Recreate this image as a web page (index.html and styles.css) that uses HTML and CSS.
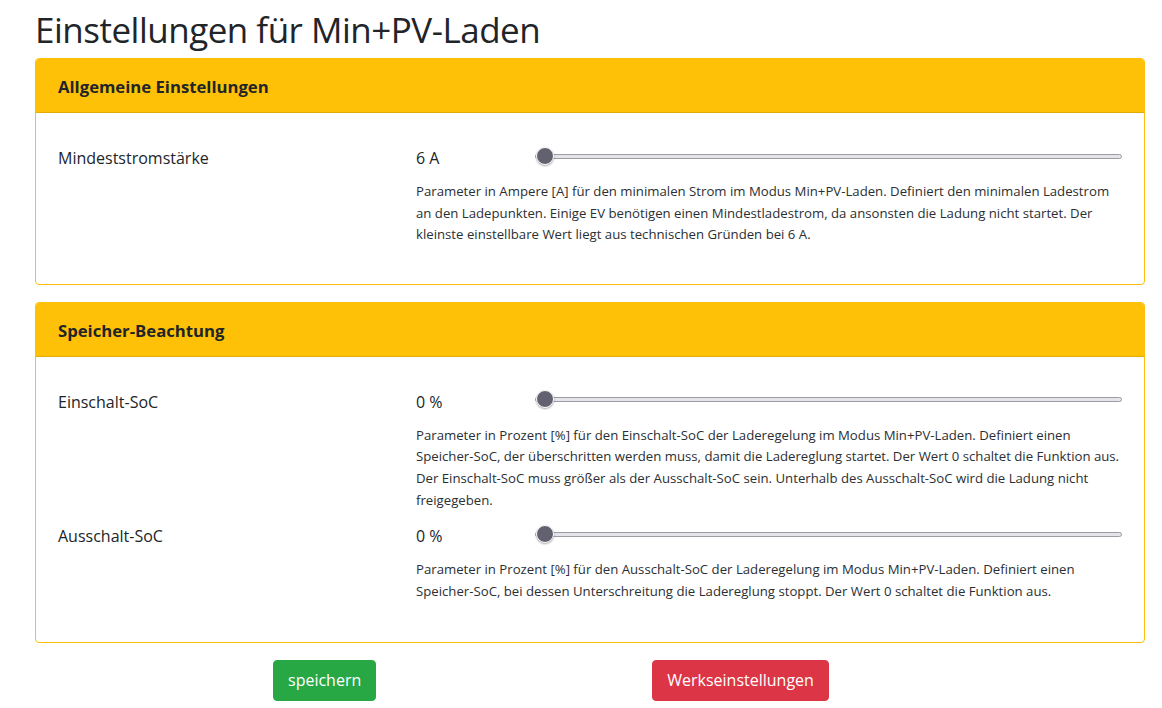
FILE: index.html
```html
<!DOCTYPE html>
<html lang="de">
<head>
<meta charset="utf-8">
<title>Einstellungen für Min+PV-Laden</title>
<link rel="stylesheet" href="styles.css">
</head>
<body>
<main class="page">
  <h1 class="title">Einstellungen für Min+PV-Laden</h1>

  <section class="card">
    <header class="card-header">Allgemeine Einstellungen</header>
    <div class="card-body">
      <div class="setting">
        <div class="setting-label">Mindeststromstärke</div>
        <div class="setting-value">6 A</div>
        <input class="slider" type="range" min="6" max="32" value="6">
        <p class="setting-help">Parameter in Ampere [A] für den minimalen Strom im Modus Min+PV-Laden. Definiert den minimalen Ladestrom<br>an den Ladepunkten. Einige EV benötigen einen Mindestladestrom, da ansonsten die Ladung nicht startet. Der<br>kleinste einstellbare Wert liegt aus technischen Gründen bei 6 A.</p>
      </div>
    </div>
  </section>

  <section class="card">
    <header class="card-header">Speicher-Beachtung</header>
    <div class="card-body">
      <div class="setting">
        <div class="setting-label">Einschalt-SoC</div>
        <div class="setting-value">0 %</div>
        <input class="slider" type="range" min="0" max="100" value="0">
        <p class="setting-help">Parameter in Prozent [%] für den Einschalt-SoC der Laderegelung im Modus Min+PV-Laden. Definiert einen<br>Speicher-SoC, der überschritten werden muss, damit die Ladereglung startet. Der Wert 0 schaltet die Funktion aus.<br>Der Einschalt-SoC muss größer als der Ausschalt-SoC sein. Unterhalb des Ausschalt-SoC wird die Ladung nicht<br>freigegeben.</p>
      </div>
      <div class="setting">
        <div class="setting-label">Ausschalt-SoC</div>
        <div class="setting-value">0 %</div>
        <input class="slider" type="range" min="0" max="100" value="0">
        <p class="setting-help">Parameter in Prozent [%] für den Ausschalt-SoC der Laderegelung im Modus Min+PV-Laden. Definiert einen<br>Speicher-SoC, bei dessen Unterschreitung die Ladereglung stoppt. Der Wert 0 schaltet die Funktion aus.</p>
      </div>
    </div>
  </section>

  <div class="actions">
    <button class="btn btn-save" type="button">speichern</button>
    <button class="btn btn-reset" type="button">Werkseinstellungen</button>
  </div>
</main>
</body>
</html>
```

FILE: styles.css
```css
* {
  box-sizing: border-box;
}

html, body {
  margin: 0;
  padding: 0;
  background: #ffffff;
}

body {
  font-family: "Open Sans", "Noto Sans", sans-serif;
  color: #212529;
  font-size: 16px;
  line-height: 24px;
}

.page {
  padding: 8px 17px 0 35px;
}

.title {
  margin: 0 0 6px 0;
  font-size: 35px;
  line-height: 44px;
  font-weight: 400;
  letter-spacing: -0.5px;
  color: #212529;
}

.card {
  border: 1px solid #ffc107;
  border-radius: 4px;
  background: #ffffff;
  margin-bottom: 17px;
  overflow: hidden;
}

.card-header {
  background: #ffc107;
  border-bottom: 1px solid #e3ac0b;
  height: 54px;
  padding: 3px 22px 0 22px;
  display: flex;
  align-items: center;
  font-weight: 700;
  font-size: 16.7px;
}

.card-body {
  padding: 33px 22px 38px 22px;
}

.card + .card .card-body {
  padding-bottom: 40px;
}

.setting {
  display: grid;
  grid-template-columns: 358px 119px 1fr;
  align-items: center;
  row-gap: 11px;
}

.setting + .setting {
  margin-top: 13px;
}

.setting-label,
.setting-value {
  font-size: 16px;
  line-height: 24px;
}

.setting-help {
  grid-column: 2 / 4;
  margin: 0;
  font-size: 13.2px;
  line-height: 21.6px;
  white-space: nowrap;
  color: #2b2f33;
}

.slider {
  -webkit-appearance: none;
  appearance: none;
  width: 100%;
  height: 20px;
  margin: 0;
  padding: 0;
  background: transparent;
  position: relative;
  top: -2px;
}

.slider::-webkit-slider-runnable-track {
  height: 5px;
  background: #e4e4ea;
  border: 1px solid #9c9ca3;
  border-radius: 3px;
}

.slider::-webkit-slider-thumb {
  -webkit-appearance: none;
  appearance: none;
  width: 18px;
  height: 18px;
  margin-top: -8px;
  border-radius: 50%;
  background: #62616f;
  border: 1px solid #ffffff;
  box-shadow: 0 1px 2px rgba(0, 0, 0, 0.35);
}

.actions {
  display: flex;
  margin-top: 3px;
  padding-left: 238px;
  gap: 276px;
}

.btn {
  font-family: inherit;
  font-size: 16px;
  line-height: 23px;
  padding: 8px 14px;
  border-radius: 4px;
  color: #ffffff;
  cursor: pointer;
}

.btn-save {
  background: #28a745;
  border: 1px solid #28a745;
}

.btn-reset {
  background: #dc3545;
  border: 1px solid #dc3545;
}
```
